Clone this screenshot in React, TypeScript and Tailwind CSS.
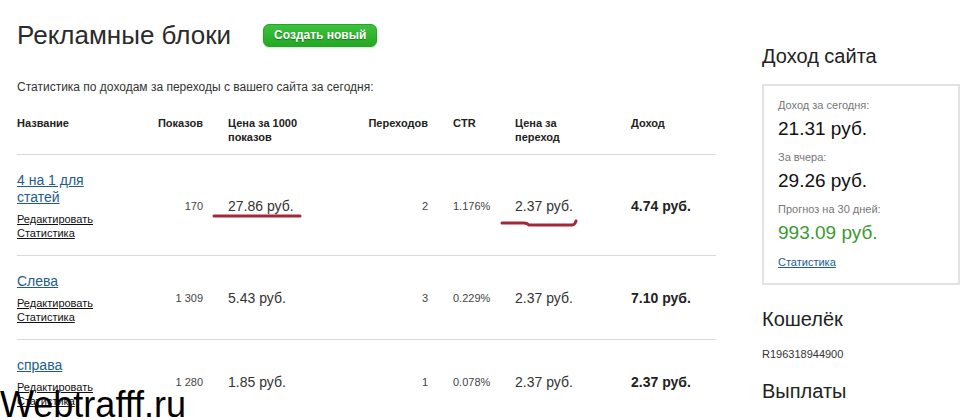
import React from "react";

type Row = {
  name: string[];
  shows: string;
  cpm: string;
  clicks: string;
  ctr: string;
  cpc: string;
  income: string;
};

const rows: Row[] = [
  { name: ["4 на 1 для", "статей"], shows: "170", cpm: "27.86 руб.", clicks: "2", ctr: "1.176%", cpc: "2.37 руб.", income: "4.74 руб." },
  { name: ["Слева"], shows: "1 309", cpm: "5.43 руб.", clicks: "3", ctr: "0.229%", cpc: "2.37 руб.", income: "7.10 руб." },
  { name: ["справа"], shows: "1 280", cpm: "1.85 руб.", clicks: "1", ctr: "0.078%", cpc: "2.37 руб.", income: "2.37 руб." },
];

const cols = "grid grid-cols-[140px_46px_163px_62px_62px_116px_110px]";

function AdRow({ row }: { row: Row }) {
  return (
    <div className={`${cols} items-center border-b border-[#d9d9d9] pt-[17px] pb-[15px]`}>
      <div>
        <a className="block text-[14px] leading-[17px] text-[#235c8c] underline">
          {row.name.map((l) => (
            <span key={l} className="block">{l}</span>
          ))}
        </a>
        <div className="mt-[6px] text-[11px] leading-[14px] text-[#111]">
          <a className="block underline">Редактировать</a>
          <a className="block underline">Статистика</a>
        </div>
      </div>
      <div className="text-right text-[11px] text-[#444]">{row.shows}</div>
      <div className="pl-[25px] text-[14px] text-[#333]">{row.cpm}</div>
      <div className="text-right text-[11px] text-[#444]">{row.clicks}</div>
      <div className="pl-[25px] text-[11px] text-[#444]">{row.ctr}</div>
      <div className="pl-[25px] text-[14px] text-[#333]">{row.cpc}</div>
      <div className="pl-[25px] text-[14px] font-bold text-[#222]">{row.income}</div>
    </div>
  );
}

export default function App() {
  return (
    <div className="relative h-[420px] w-[964px] overflow-hidden bg-white font-['Liberation_Sans',Arial,sans-serif] text-[#333]">
      <div className="flex">
        <main className="w-[762px] shrink-0 pl-[17px] pt-[19px]">
          <div className="flex items-center">
            <h1 className="text-[26px] leading-[32px] text-[#2b2b2b]">Рекламные блоки</h1>
            <button className="ml-[32px] h-[23px] rounded-[6px] border border-[#27a327] bg-gradient-to-b from-[#3cc23c] to-[#22a822] px-[10px] text-[12px] font-bold text-white [text-shadow:0_1px_1px_rgba(0,0,0,0.35)] shadow-[0_1px_2px_rgba(0,0,0,0.15)]">
              Создать новый
            </button>
          </div>
          <p className="mt-[28px] text-[12px] leading-[16px] text-[#333]">
            Статистика по доходам за переходы с вашего сайта за сегодня:
          </p>

          <div className="relative mt-[21px] w-[699px]">
            <div className={`${cols} border-b border-[#d9d9d9] pb-[10px] text-[11px] font-bold leading-[14px] text-[#222]`}>
              <div>Название</div>
              <div className="text-right">Показов</div>
              <div className="pl-[25px]">Цена за 1000<br />показов</div>
              <div className="text-right">Переходов</div>
              <div className="pl-[25px]">CTR</div>
              <div className="pl-[25px]">Цена за<br />переход</div>
              <div className="pl-[25px]">Доход</div>
            </div>
            {rows.map((r) => (
              <AdRow key={r.name.join(" ")} row={r} />
            ))}

            {/* red marker annotations */}
            <svg className="pointer-events-none absolute left-0 top-0" width="699" height="130" viewBox="0 0 699 130">
              <path d="M197 100 L283 100" stroke="#a3283b" strokeWidth="3" strokeLinecap="round" fill="none" />
              <path d="M485 107 L507 107 Q510 107 512 109 L555 109 Q558 109 559 105" stroke="#a3283b" strokeWidth="3" strokeLinecap="round" fill="none" />
            </svg>
          </div>
        </main>

        <aside className="w-[198px] shrink-0 pt-[44px]">
          <h2 className="text-[20px] leading-[24px] text-[#222]">Доход сайта</h2>
          <div className="mt-[16px] border-2 border-[#e2e2e2] px-[14px] pt-[12px] pb-[14px]">
            <div className="text-[11px] leading-[14px] text-[#777]">Доход за сегодня:</div>
            <div className="mt-[6px] text-[19px] leading-[22px] text-[#111]">21.31 руб.</div>
            <div className="mt-[10px] text-[11px] leading-[14px] text-[#777]">За вчера:</div>
            <div className="mt-[6px] text-[19px] leading-[22px] text-[#111]">29.26 руб.</div>
            <div className="mt-[10px] text-[11px] leading-[14px] text-[#777]">Прогноз на 30 дней:</div>
            <div className="mt-[6px] text-[19px] leading-[22px] text-[#3a9a2f]">993.09 руб.</div>
            <a className="mt-[11px] block text-[11px] leading-[14px] text-[#1d5c96] underline">Статистика</a>
          </div>
          <h2 className="mt-[22px] text-[20px] leading-[24px] text-[#222]">Кошелёк</h2>
          <div className="mt-[16px] text-[11px] leading-[14px] text-[#333]">R196318944900</div>
          <h2 className="mt-[18px] text-[20px] leading-[24px] text-[#222]">Выплаты</h2>
        </aside>
      </div>

      <div className="absolute bottom-[-3px] left-0 text-[36px] leading-[36px] text-black">Webtrafff.ru</div>
    </div>
  );
}
